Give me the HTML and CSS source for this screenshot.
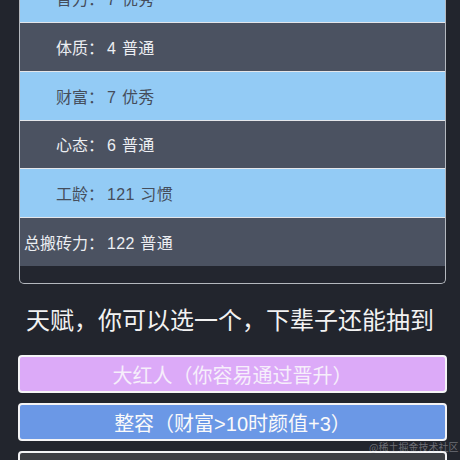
FILE: index.html
```html
<!DOCTYPE html>
<html lang="zh">
<head>
<meta charset="utf-8">
<link rel="stylesheet" href="styles.css">
</head>
<body>
<div class="panel">
  <div class="row light"><span class="label">智力：</span><span class="val">7 优秀</span></div>
  <div class="row dark"><span class="label">体质：</span><span class="val">4 普通</span></div>
  <div class="row light"><span class="label">财富：</span><span class="val">7 优秀</span></div>
  <div class="row dark"><span class="label">心态：</span><span class="val">6 普通</span></div>
  <div class="row light"><span class="label">工龄：</span><span class="val">121 习惯</span></div>
  <div class="row dark last"><span class="label">总搬砖力：</span><span class="val">122 普通</span></div>
</div>
<h2 class="title">天赋，你可以选一个，下辈子还能抽到</h2>
<div class="btn purple">大红人（你容易通过晋升）</div>
<div class="btn blue">整容（财富&gt;10时颜值+3）</div>
<div class="btn gray">&nbsp;</div>
<div class="mark">@稀土掘金技术社区</div>
</body>
</html>
```
FILE: styles.css
```css
html, body {
  margin: 0;
  padding: 0;
  background: #22252d;
  height: 460px;
  overflow: hidden;
}
body {
  font-family: "Liberation Sans", "Noto Sans CJK SC", sans-serif;
  position: relative;
}
.panel {
  margin: -25.8px 14px 0 19px;
  border: 1px solid #b4b8be;
  border-top: none;
  border-radius: 0 0 5px 5px;
  background: #23262f;
  padding-bottom: 17.5px;
}
.row {
  height: 47.8px;
  border-bottom: 1px solid #e4e6ea;
  display: flex;
  align-items: center;
  font-size: 16px;
}
.row.last {
  border-bottom: none;
}
.light {
  background: #93cbf5;
  color: #454d5b;
}
.dark {
  background: #4b5261;
  color: #eceef2;
}
.label {
  width: 84px;
  text-align: right;
  white-space: nowrap;
  flex: none;
}
.val {
  margin-left: 3px;
  word-spacing: 1px;
  letter-spacing: 0.3px;
}
.title {
  margin: 20px 0 17px 0;
  font-weight: normal;
  font-size: 24px;
  line-height: 34px;
  text-align: center;
  color: #f2f2f2;
}
.btn {
  margin: 0 13px 10px 18px;
  height: 34px;
  border: 2px solid #f4f4f6;
  border-radius: 4px;
  display: flex;
  align-items: center;
  justify-content: center;
  font-size: 20px;
  color: #fafafa;
}
.purple {
  background: #dcaaf8;
  color: #f6effb;
}
.blue {
  background: #6b98e6;
}
.gray {
  background: #3d3f44;
}
.mark {
  position: absolute;
  left: 369px;
  top: 440px;
  font-size: 10px;
  line-height: 14px;
  color: rgba(200, 200, 205, 0.45);
  font-family: "Noto Sans CJK SC", sans-serif;
  white-space: nowrap;
}
```
